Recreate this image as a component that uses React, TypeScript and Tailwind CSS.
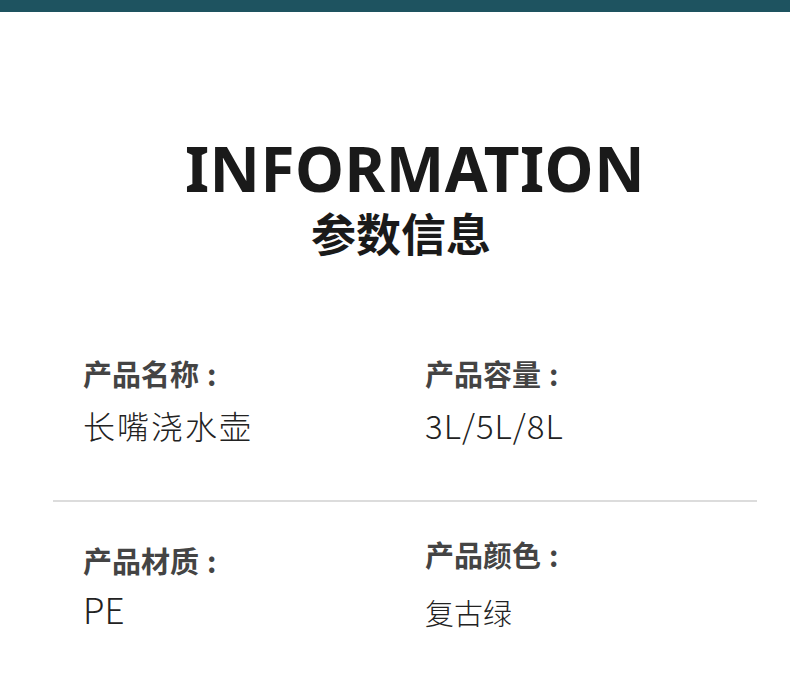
const cjk = { fontFamily: '"Noto Sans CJK SC", "Noto Sans", sans-serif' };

function Field({
  label,
  value,
  labelClass = "",
  valueClass = "",
}: {
  label: string;
  value: string;
  labelClass?: string;
  valueClass?: string;
}) {
  return (
    <div className="flex flex-col">
      <div
        className={`flex items-center text-[29px] leading-none font-bold text-[#444444] ${labelClass}`}
      >
        <span>{label}</span>
        <span className="ml-[8px]">:</span>
      </div>
      <div
        className={`font-light leading-none text-[#222222] ${valueClass}`}
      >
        {value}
      </div>
    </div>
  );
}

export default function App() {
  return (
    <div className="w-[790px] h-[694px] bg-white overflow-hidden" style={cjk}>
      <div className="h-[12px] bg-[#1e5360]" />

      {/* heading */}
      <div className="flex flex-col items-center mt-[128px]">
        <h1
          className="pl-[40px] text-[62px] leading-[56px] font-bold tracking-[0.5px] text-[#1a1a1a]"
          style={{ fontFamily: '"Noto Sans", sans-serif' }}
        >
          INFORMATION
        </h1>
        <h2 className="pl-[12px] mt-[14px] text-[45px] leading-none font-bold text-[#1a1a1a]">
          参数信息
        </h2>
      </div>

      {/* row 1 */}
      <div className="grid grid-cols-[342px_1fr] px-[83px] mt-[104px]">
        <Field
          label="产品名称"
          value="长嘴浇水壶"
          valueClass="mt-[21px] text-[32px] tracking-[2px]"
        />
        <Field
          label="产品容量"
          value="3L/5L/8L"
          valueClass="mt-[21px] text-[33px] tracking-[1px]"
        />
      </div>

      <div className="ml-[53px] mr-[33px] mt-[58px] h-[2px] bg-[#dcdcdc]" />

      {/* row 2 */}
      <div className="grid grid-cols-[342px_1fr] px-[83px] mt-[38px]">
        <Field
          label="产品材质"
          value="PE"
          labelClass="mt-[6px]"
          valueClass="mt-[16px] text-[35px]"
        />
        <Field
          label="产品颜色"
          value="复古绿"
          valueClass="mt-[29px] text-[29px]"
        />
      </div>
    </div>
  );
}
